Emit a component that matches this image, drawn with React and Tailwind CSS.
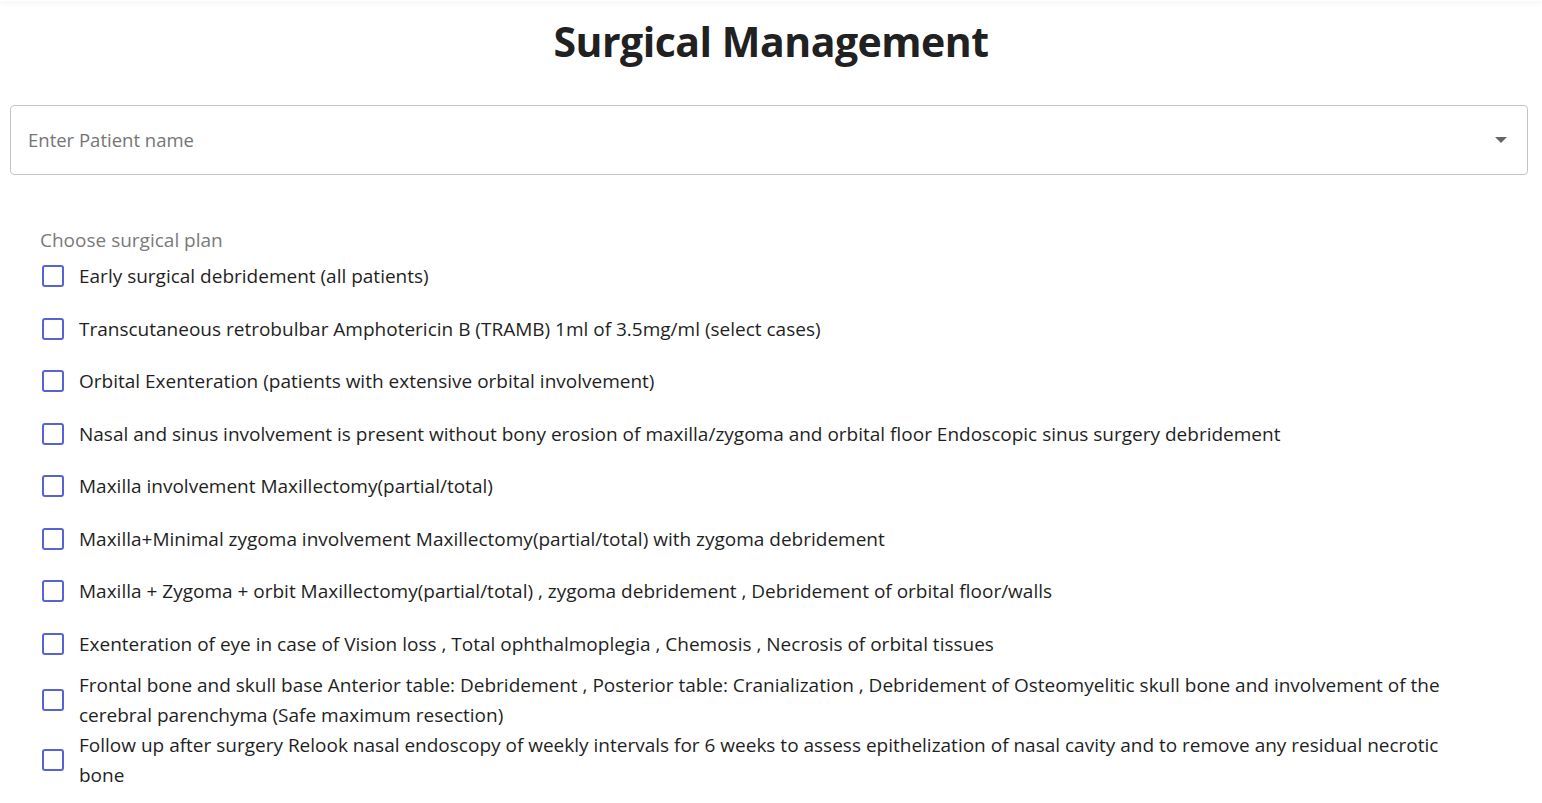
import React from "react";

const items = [
  "Early surgical debridement (all patients)",
  "Transcutaneous retrobulbar Amphotericin B (TRAMB) 1ml of 3.5mg/ml (select cases)",
  "Orbital Exenteration (patients with extensive orbital involvement)",
  "Nasal and sinus involvement is present without bony erosion of maxilla/zygoma and orbital floor Endoscopic sinus surgery debridement",
  "Maxilla involvement Maxillectomy(partial/total)",
  "Maxilla+Minimal zygoma involvement Maxillectomy(partial/total) with zygoma debridement",
  "Maxilla + Zygoma + orbit Maxillectomy(partial/total) , zygoma debridement , Debridement of orbital floor/walls",
  "Exenteration of eye in case of Vision loss , Total ophthalmoplegia , Chemosis , Necrosis of orbital tissues",
  "Frontal bone and skull base Anterior table: Debridement , Posterior table: Cranialization , Debridement of Osteomyelitic skull bone and involvement of the cerebral parenchyma (Safe maximum resection)",
  "Follow up after surgery Relook nasal endoscopy of weekly intervals for 6 weeks to assess epithelization of nasal cavity and to remove any residual necrotic bone",
];

export default function App() {
  return (
    <div
      className="min-h-[803px] w-full bg-white text-[#212121]"
      style={{ fontFamily: '"Open Sans", "Noto Sans", sans-serif' }}
    >
      <div className="h-px w-full shadow-[0_1px_5px_rgba(0,0,0,0.18)]" />
      <h1 className="pt-[14px] text-center text-[41px] font-bold leading-[52px] tracking-[-0.5px] text-[#212121]">
        Surgical Management
      </h1>
      <div className="mt-[38px] ml-[10px] flex h-[70px] w-[1518px] items-center justify-between rounded-[4px] border border-[#c4c4c4] pl-[17px] pr-[19px]">
        <span className="text-[18.5px] text-[#757575]">Enter Patient name</span>
        <svg width="14" height="8" viewBox="0 0 14 8">
          <path d="M1 1h12L7 7z" fill="#666" />
        </svg>
      </div>
      <div className="mt-[56px] pl-[40px]">
        <div className="text-[19px] leading-[19px] text-[#7a7a7a]">Choose surgical plan</div>
        <div className="flex flex-col">
          {items.map((t, i) => (
            <label key={i} className="flex min-h-[52.5px] items-center">
              <span className="flex w-[39px] shrink-0 items-center">
                <span className="ml-[2px] block h-[22px] w-[22px] rounded-[3px] border-[2.5px] border-[#5563d6]" />
              </span>
              <span className="max-w-[1362px] text-[19px] leading-[30px] text-[#1f1f1f]">
                {t}
              </span>
            </label>
          ))}
        </div>
      </div>
    </div>
  );
}
